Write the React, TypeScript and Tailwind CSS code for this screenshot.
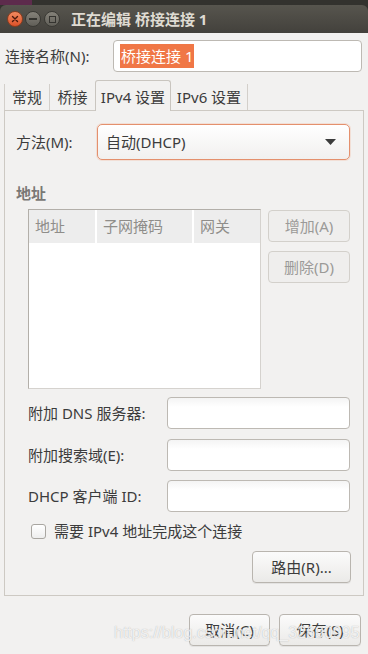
import React from "react";

const font = { fontFamily: '"Noto Sans", "Noto Sans CJK SC", sans-serif' };

function Btn({ children, className = "", disabled = false }: { children: React.ReactNode; className?: string; disabled?: boolean }) {
  return (
    <div
      className={
        "flex items-center justify-center rounded-[4px] border text-[15px] " +
        (disabled
          ? "border-[#d3d0cb] bg-[#efeeed] text-[#9b9a98] "
          : "border-[#b9b5af] bg-gradient-to-b from-[#fbfbfb] to-[#ebeae8] text-[#3c3c3c] shadow-[0_1px_0_rgba(0,0,0,0.06)] ") +
        className
      }
    >
      {children}
    </div>
  );
}

function Field({ label, mt }: { label: string; mt: string }) {
  return (
    <div className={"flex items-center " + mt}>
      <div className="w-[162px] pl-[23px] text-[15px] text-[#3c3c3c]">{label}</div>
      <div className="h-[32px] w-[183px] rounded-[4px] border border-[#bdb9b3] bg-gradient-to-b from-[#f4f4f4] to-white to-[30%]" />
    </div>
  );
}

export default function App() {
  return (
    <div className="relative h-[654px] w-[368px] overflow-hidden bg-[#f2f1f0]" style={font}>
      {/* behind strip */}
      <div className="flex h-[5px]">
        <div className="w-[32px] bg-[#5d2b4c]" />
        <div className="flex-1 bg-[#33322e]" />
      </div>
      {/* title bar */}
      <div className="bg-[#33322e]">
        <div className="flex h-[28px] items-center rounded-t-[6px] bg-gradient-to-b from-[#57554e] to-[#43413c]">
          <div className="ml-[7px] flex h-[16px] w-[16px] items-center justify-center rounded-full border border-[#8a3d1f] bg-gradient-to-b from-[#f28a5f] to-[#dd5128]">
            <svg width="8" height="8" viewBox="0 0 8 8">
              <path d="M1.5 1.5 L6.5 6.5 M6.5 1.5 L1.5 6.5" stroke="#4a1a0c" strokeWidth="1.4" strokeLinecap="round" />
            </svg>
          </div>
          <div className="ml-[2px] flex h-[16px] w-[16px] items-center justify-center rounded-full border border-[#3a3934] bg-gradient-to-b from-[#85827a] to-[#615f58]">
            <div className="h-[1.5px] w-[8px] bg-[#34332f]" />
          </div>
          <div className="ml-[3px] flex h-[16px] w-[16px] items-center justify-center rounded-full border border-[#3a3934] bg-gradient-to-b from-[#85827a] to-[#615f58]">
            <div className="h-[7px] w-[7px] border-[1.5px] border-[#34332f]" />
          </div>
          <div className="ml-[11px] text-[15px] font-bold text-[#dfdbd2]">正在编辑 桥接连接 1</div>
        </div>
      </div>

      {/* name row */}
      <div className="mt-[7px] flex items-center">
        <div className="w-[113px] pl-[5px] text-[15px] text-[#3c3c3c]">连接名称(N):</div>
        <div className="flex h-[32px] w-[249px] items-center rounded-[4px] border border-[#bdb9b3] bg-white pl-[6px]">
          <span className="bg-[#f07746] px-[1px] text-[15px] leading-[24px] text-white">桥接连接 1</span>
        </div>
      </div>

      {/* tabs */}
      <div className="mt-[8px] flex h-[30px] items-end pl-[4px] text-[15px] text-[#3c3c3c]">
        <div className="flex h-[26px] w-[45px] items-center justify-center border-l border-[#d3cfca]">常规</div>
        <div className="flex h-[26px] w-[46px] items-center justify-center border-l border-[#d3cfca]">桥接</div>
        <div className="relative z-10 -mb-px flex h-[31px] w-[76px] items-center justify-center rounded-t-[3px] border border-b-0 border-[#c9c5bf] bg-[#f2f1f0] pt-[3px]">
          IPv4 设置
        </div>
        <div className="flex h-[26px] w-[77px] items-center justify-center border-r border-[#d3cfca]">IPv6 设置</div>
      </div>

      {/* panel */}
      <div className="mx-[4px] flex flex-col border border-[#cdc9c3] pb-[12px]">
        <div className="mt-[13px] flex items-center">
          <div className="w-[92px] pl-[11px] text-[15px] text-[#3c3c3c]">方法(M):</div>
          <div className="flex h-[36px] w-[253px] items-center justify-between rounded-[5px] border border-[#e4906d] bg-gradient-to-b from-white to-[#f1f0ef] pl-[8px] pr-[13px] text-[15px] text-[#3c3c3c] shadow-[0_0_0_1px_rgba(240,119,70,0.15)]">
            <span>自动(DHCP)</span>
            <svg width="11" height="6" viewBox="0 0 11 6">
              <path d="M0 0 L11 0 L5.5 6 Z" fill="#3c3c3c" />
            </svg>
          </div>
        </div>

        <div className="mt-[24px] h-[18px] pl-[11px] text-[15px] font-bold leading-[18px] text-[#7a7875]">地址</div>

        <div className="mt-[7px] flex pl-[23px]">
          <div className="flex h-[180px] w-[233px] flex-col border border-[#b3afa9] border-b-[#d5d2ce] border-r-[#d5d2ce] bg-white">
            <div className="flex h-[33px] text-[15px] text-[#8f8d8a]">
              <div className="flex w-[66px] items-center bg-[#ededed] pl-[6px]">地址</div>
              <div className="ml-[2px] flex w-[95px] items-center bg-[#ededed] pl-[6px]">子网掩码</div>
              <div className="ml-[2px] flex flex-1 items-center bg-[#ededed] pl-[6px]">网关</div>
            </div>
          </div>
          <div className="ml-[7px] mt-[1px] flex flex-col gap-[9px]">
            <Btn disabled className="h-[32px] w-[82px]">增加(A)</Btn>
            <Btn disabled className="h-[32px] w-[82px]">删除(D)</Btn>
          </div>
        </div>

        <Field label="附加 DNS 服务器:" mt="mt-[8px]" />
        <Field label="附加搜索域(E):" mt="mt-[10px]" />
        <Field label="DHCP 客户端 ID:" mt="mt-[9px]" />

        <div className="mt-[12px] flex h-[15px] items-center pl-[26px]">
          <div className="h-[15px] w-[15px] rounded-[3px] border border-[#a9a6a1] bg-gradient-to-b from-white to-[#eeeeee]" />
          <div className="ml-[8px] text-[15px] text-[#3c3c3c]">需要 IPv4 地址完成这个连接</div>
        </div>

        <div className="mt-[12px] flex justify-end pr-[12px]">
          <Btn className="h-[32px] w-[99px]">路由(R)...</Btn>
        </div>
      </div>

      {/* bottom buttons */}
      <div className="mt-[18px] flex justify-end gap-[9px] pr-[7px]">
        <Btn className="h-[32px] w-[81px]">取消(C)</Btn>
        <Btn className="h-[32px] w-[82px]">保存(S)</Btn>
      </div>

      {/* watermark */}
      <div
        className="pointer-events-none absolute left-[114px] top-[621px] text-[16px] text-white/80 [text-shadow:0_0_1px_rgba(120,120,120,0.6)]"
        style={{ fontFamily: '"Liberation Sans", sans-serif' }}
      >
        https://blog.csdn.net/qq_32690995
      </div>
    </div>
  );
}
